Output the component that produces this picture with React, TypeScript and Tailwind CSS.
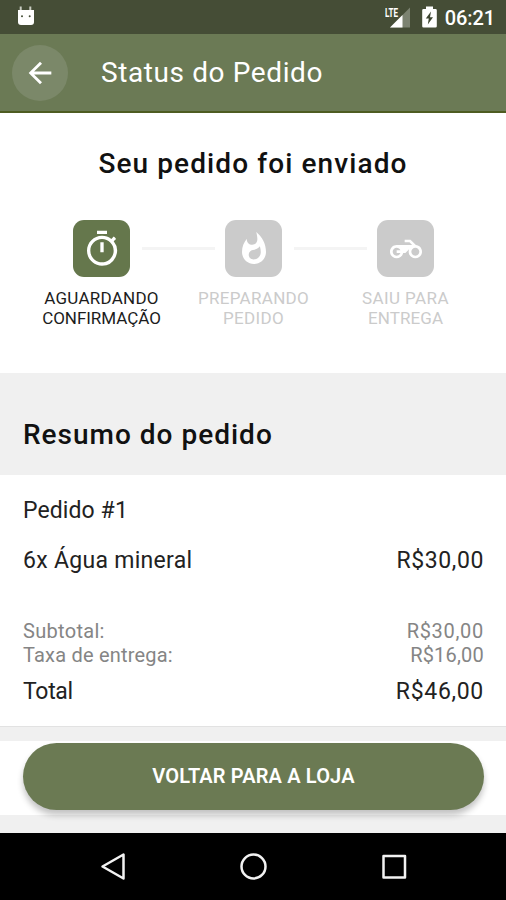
import { MdArrowBack, MdOutlineTimer, MdWhatshot } from 'react-icons/md';
import clsx from 'clsx';

const Motorcycle = ({ size }: { size: number }) => (
  <svg width={size} height={size} viewBox="0 0 24 24" fill="currentColor">
    <path d="M19.44 9.03L15.41 5H11v2h3.59l2 2H5c-2.8 0-5 2.2-5 5s2.2 5 5 5c2.46 0 4.45-1.69 4.9-4h1.65l2.77-2.77c-.21.54-.32 1.14-.32 1.77 0 2.8 2.2 5 5 5s5-2.2 5-5c0-2.65-1.97-4.77-4.56-4.97zM7.82 15C7.4 16.15 6.28 17 5 17c-1.63 0-3-1.37-3-3s1.37-3 3-3c1.28 0 2.4.85 2.82 2H5v2h2.82zM19 17c-1.66 0-3-1.34-3-3s1.34-3 3-3 3 1.34 3 3-1.34 3-3 3z" />
  </svg>
);

interface Step {
  id: string;
  icon: React.ComponentType<{ size: number }>;
  size: number;
  lines: { text: string; spacing: string }[];
  active: boolean;
}

const steps: Step[] = [
  { id: 'sent',  icon: MdOutlineTimer, size: 40, active: true,  lines: [{ text: 'AGUARDANDO', spacing: 'tracking-[0.25px]' }, { text: 'CONFIRMAÇÃO', spacing: 'tracking-[-0.05px]' }] },
  { id: 'prep',  icon: MdWhatshot,     size: 36, active: false, lines: [{ text: 'PREPARANDO', spacing: 'tracking-[0.3px]' }, { text: 'PEDIDO', spacing: 'tracking-[0.3px]' }] },
  { id: 'route', icon: Motorcycle,     size: 32, active: false, lines: [{ text: 'SAIU PARA', spacing: 'tracking-[0.4px]' }, { text: 'ENTREGA', spacing: 'tracking-[0.1px]' }] },
];

const StatusBar = () => (
  <div className="flex h-[34px] items-center bg-[#454d36] pl-[17px] pr-[11px] text-white">
    <svg width="18" height="20" viewBox="0 0 18 20" className="-mt-0.5">
      <path d="M3.7 0.5V5M13.3 0.5V5" stroke="#c9cdc2" strokeWidth="2" />
      <path d="M1 4h16v12a3 3 0 0 1-3 3H4a3 3 0 0 1-3-3z" fill="#fff" />
      <circle cx="5" cy="10.3" r="1" fill="#454d36" />
      <circle cx="12.7" cy="10.3" r="1" fill="#454d36" />
    </svg>
    <div className="ml-auto flex items-center">
      <svg width="26" height="22" viewBox="0 0 26 22">
        <path d="M5 21.5L25 1.5V21.5Z" fill="#7c8371" />
        <path d="M5 21.5L17.5 9V21.5Z" fill="#fff" />
        <path d="M0 0H13.5V11H0Z" fill="#454d36" />
        <text x="0" y="10.5" fontSize="13" fontWeight="700" fill="#fff" textLength="13" lengthAdjust="spacingAndGlyphs" fontFamily="Roboto, sans-serif">LTE</text>
      </svg>
      <svg width="15" height="22" viewBox="0 0 15 22" className="ml-[11px]">
        <path d="M4 0.5h7v2.5h2.5a1.3 1.3 0 0 1 1.3 1.3v16a1.3 1.3 0 0 1-1.3 1.3h-12a1.3 1.3 0 0 1-1.3-1.3v-16a1.3 1.3 0 0 1 1.3-1.3h2.5z" fill="#fff" />
        <path d="M9 5.5L3.8 12.5h3L5.8 18.5 11 11.2H8z" fill="#3d4530" />
      </svg>
      <span className="ml-2 pt-0.5 text-[20px] font-medium leading-none tracking-[-0.1px]">06:21</span>
    </div>
  </div>
);

const AppBar = () => (
  <header className="flex h-[79px] items-center border-b-2 border-[#4e5c21] bg-[#6b7a55] pl-3 text-white">
    <button className="flex size-14 items-center justify-center rounded-full bg-[#7b8869]" aria-label="Voltar">
      <MdArrowBack size={34} />
    </button>
    <h1 className="ml-[33px] pt-px text-[28px] tracking-[0.6px]">Status do Pedido</h1>
  </header>
);

const Progress = () => (
  <section className="h-[260px] bg-white pt-[29px]">
    <h2 className="text-center text-[28px] leading-[44px] font-medium tracking-[1.1px] text-[#111]">Seu pedido foi enviado</h2>
    <div className="mt-[34px] flex justify-center pl-px">
      {steps.map(({ id, icon: Icon, size, lines, active }, index) => (
        <div key={id} className="relative flex w-[152px] flex-col items-center">
          {index > 0 && <div className="absolute top-[27px] -left-9 h-[3px] w-[73px] bg-[#f4f4f4]" />}
          <div className={clsx('flex size-[57px] items-center justify-center rounded-[11px] text-white', active ? 'bg-[#65774c]' : 'bg-[#cbcbcb]')}>
            <Icon size={size} />
          </div>
          <div className={clsx('mt-[11px] text-center text-[17px] leading-5', active ? 'text-[#1c1c1c]' : 'text-[#cbcbcb]')}>
            {lines.map((line) => (
              <p key={line.text} className={line.spacing}>{line.text}</p>
            ))}
          </div>
        </div>
      ))}
    </div>
  </section>
);

const Summary = () => (
  <>
    <div className="h-[102px] bg-[#f0f0f0] px-[23px] pt-10">
      <h2 className="text-[28px] leading-[44px] font-medium tracking-[1px] text-[#111]">Resumo do pedido</h2>
    </div>
    <section className="h-[252px] border-b border-[#e2e2e2] bg-white px-[23px] pt-[21px] text-[23px] leading-[30px] text-[#222]">
      <p className="tracking-[0.1px]">Pedido #1</p>
      <div className="mt-5 flex justify-between">
        <span className="tracking-[0.3px]">6x Água mineral</span>
        <span className="-mr-px tracking-[0.6px]">R$30,00</span>
      </div>
      <div className="mt-[43px] text-[20px] leading-6 text-[#858585]">
        <div className="flex justify-between">
          <span className="tracking-[0.3px]">Subtotal:</span>
          <span className="-mr-px tracking-[0.7px]">R$30,00</span>
        </div>
        <div className="flex justify-between">
          <span className="tracking-[0.2px]">Taxa de entrega:</span>
          <span className="-mr-px tracking-[0.2px]">R$16,00</span>
        </div>
      </div>
      <div className="mt-[10px] flex justify-between">
        <span className="tracking-[-0.3px]">Total</span>
        <span className="-mr-px tracking-[0.7px]">R$46,00</span>
      </div>
    </section>
  </>
);

const Footer = () => (
  <div className="h-[106px] bg-[#f0f0f0] pt-[14px]">
    <div className="h-[74px] bg-white pr-[22px] pl-[23px] pt-0.5">
      <button className="h-[67px] w-full rounded-full bg-[#6b7a53] pb-0.5 text-[20px] font-semibold tracking-[0.15px] text-white shadow-[0_5px_6px_rgba(0,0,0,0.24)]">
        VOLTAR PARA A LOJA
      </button>
    </div>
  </div>
);

const NavBar = () => (
  <nav className="h-[67px] bg-black">
    <svg width="506" height="67" fill="none" stroke="#f2f2f2" strokeWidth="2.5" strokeLinejoin="round">
      <path d="M123.5 21.5V45.5L102.5 33.5Z" />
      <circle cx="253.5" cy="33.5" r="12" />
      <rect x="383.5" y="23" width="21.5" height="21.5" />
    </svg>
  </nav>
);

const App = () => (
  <div className="w-[506px] bg-white font-[Roboto,sans-serif]">
    <StatusBar />
    <AppBar />
    <Progress />
    <Summary />
    <Footer />
    <NavBar />
  </div>
);

export default App;
